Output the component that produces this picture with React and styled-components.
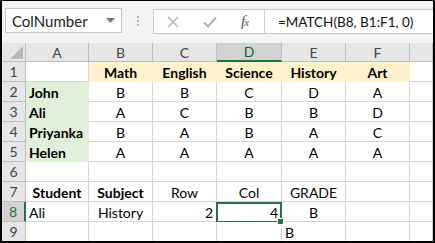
import styled, { createGlobalStyle } from 'styled-components';

const GlobalStyle = createGlobalStyle`
  html, body {
    margin: 0;
    padding: 0;
    background: #ffffff;
  }
  body {
    font-family: Lato, 'Liberation Sans', sans-serif;
  }
`;

const green = '#217346';
const gridLine = '#d4d4d4';

const Frame = styled.div`
  width: 435px;
  height: 243px;
  box-sizing: border-box;
  border-style: solid;
  border-color: #000;
  border-width: 1px 2px 2px 2px;
  overflow: hidden;
  background: #fff;
  display: flex;
  flex-direction: column;
`;

const Toolbar = styled.div`
  height: 42px;
  flex: none;
  background: #f3f3f3;
  display: flex;
  align-items: flex-start;
  padding: 7px 0 0 3px;
  box-sizing: border-box;
`;

const NameBox = styled.div`
  width: 117px;
  height: 25px;
  box-sizing: border-box;
  background: #fff;
  border: 1px solid #c6c6c6;
  display: flex;
  align-items: center;
  justify-content: space-between;
  padding: 0 6px 0 6px;
  font-size: 15px;
  color: #222;
`;

const Dots = styled.div`
  width: 31px;
  height: 25px;
  display: flex;
  flex-direction: column;
  align-items: center;
  justify-content: center;
  gap: 2px;
  span {
    width: 2px;
    height: 2px;
    background: #b4b4b4;
  }
`;

const FormulaBox = styled.div`
  flex: 1;
  height: 25px;
  margin-top: 1px;
  box-sizing: border-box;
  background: #fff;
  border: 1px solid #c6c6c6;
  border-right: none;
  display: flex;
`;

const IconArea = styled.div`
  width: 111px;
  display: flex;
  align-items: center;
  gap: 24px;
  padding-left: 13px;
  box-sizing: border-box;
  border-right: 1px solid #d0d0d0;
`;

const Fx = styled.span`
  font-family: 'Liberation Serif', serif;
  font-style: italic;
  font-size: 15px;
  color: #555;
  letter-spacing: -1px;
  small {
    font-size: 11px;
  }
`;

const Formula = styled.div`
  flex: 1;
  display: flex;
  align-items: center;
  padding-left: 13px;
  font-size: 13.5px;
  color: #111;
  white-space: nowrap;
`;

const Sheet = styled.div`
  flex: 1;
  display: grid;
  grid-template-columns: 24px 63px 64px 64px 65px 64px 64px 1fr;
  grid-template-rows: 19px repeat(9, 20px);
  overflow: hidden;
`;

const Corner = styled.div`
  background: #e6e6e6;
  border-right: 1px solid #bdbdbd;
  border-bottom: 1px solid #bdbdbd;
  box-sizing: border-box;
  display: flex;
  align-items: flex-end;
  justify-content: flex-end;
  padding: 0 2px 2px 0;
  &::after {
    content: '';
    width: 0;
    height: 0;
    border-left: 13px solid transparent;
    border-bottom: 13px solid #b8b8b8;
  }
`;

const ColHead = styled.div`
  background: ${({ $active }) => ($active ? '#d2d2d2' : '#e6e6e6')};
  border-right: 1px solid #bdbdbd;
  border-bottom: ${({ $active }) =>
    $active ? `2px solid ${green}` : '1px solid #bdbdbd'};
  box-sizing: border-box;
  display: flex;
  align-items: center;
  justify-content: center;
  font-size: 14px;
  color: ${({ $active }) => ($active ? '#1d5e38' : '#444')};
`;

const RowHead = styled.div`
  background: ${({ $active }) => ($active ? '#d2d2d2' : '#e6e6e6')};
  border-right: ${({ $active }) =>
    $active ? `2px solid ${green}` : '1px solid #bdbdbd'};
  border-bottom: 1px solid #bdbdbd;
  box-sizing: border-box;
  display: flex;
  align-items: center;
  justify-content: center;
  font-size: 14px;
  color: ${({ $active }) => ($active ? green : '#444')};
`;

const Cell = styled.div`
  position: relative;
  background: ${({ $fill }) => $fill || '#fff'};
  border-right: 1px solid ${({ $fill }) => $fill || gridLine};
  border-bottom: 1px solid ${({ $fill }) => $fill || gridLine};
  box-sizing: border-box;
  display: flex;
  align-items: flex-end;
  justify-content: ${({ $align }) =>
    $align === 'right' ? 'flex-end' : $align === 'center' ? 'center' : 'flex-start'};
  padding: 0 3px 0 3px;
  font-size: 14px;
  line-height: 17px;
  font-weight: ${({ $bold }) => ($bold ? 700 : 400)};
  color: #000;
  white-space: nowrap;
  ${({ $selected }) =>
    $selected &&
    `
    &::after {
      content: '';
      position: absolute;
      left: -1px;
      top: 0;
      right: -1px;
      bottom: -2px;
      border: 2px solid ${green};
    }
    &::before {
      content: '';
      position: absolute;
      right: -3px;
      bottom: -4px;
      width: 5px;
      height: 5px;
      background: ${green};
      border: 1px solid #fff;
      z-index: 2;
    }
  `}
`;

const orange = '#fff2cc';
const mint = '#e2efda';

const c = (v, opts = {}) => ({ v, ...opts });

const rows = [
  [
    c('', {}),
    ...['Math', 'English', 'Science', 'History', 'Art'].map((s) =>
      c(s, { bold: true, align: 'center', fill: orange })
    ),
    c(''),
  ],
  ['John', 'B', 'B', 'C', 'D', 'A'],
  ['Ali', 'A', 'C', 'B', 'B', 'D'],
  ['Priyanka', 'B', 'A', 'B', 'A', 'C'],
  ['Helen', 'A', 'A', 'A', 'A', 'A'],
  [c(''), c(''), c(''), c(''), c(''), c(''), c('')],
  [
    c('Student', { bold: true, align: 'center' }),
    c('Subject', { bold: true, align: 'center' }),
    c('Row', { align: 'center' }),
    c('Col', { align: 'center' }),
    c('GRADE', { align: 'center' }),
    c(''),
    c(''),
  ],
  [
    c('Ali'),
    c('History', { align: 'center' }),
    c('2', { align: 'right' }),
    c('4', { align: 'right', selected: true }),
    c('B', { align: 'center' }),
    c(''),
    c(''),
  ],
  [c(''), c(''), c(''), c(''), c('B'), c(''), c('')],
].map((r, i) => {
  if (i >= 1 && i <= 4) {
    return [
      c(r[0], { bold: true, fill: mint }),
      ...r.slice(1).map((g) => c(g, { align: 'center' })),
      c(''),
    ];
  }
  return r;
});

const columns = ['A', 'B', 'C', 'D', 'E', 'F', ''];

const App = () => (
  <>
    <GlobalStyle />
    <Frame>
      <Toolbar>
        <NameBox>
          <span>ColNumber</span>
          <svg width="9" height="5" viewBox="0 0 9 5">
            <path d="M0 0h9L4.5 5z" fill="#777" />
          </svg>
        </NameBox>
        <Dots>
          <span />
          <span />
          <span />
        </Dots>
        <FormulaBox>
          <IconArea>
            <svg width="12" height="12" viewBox="0 0 12 12">
              <path d="M1 1L11 11M11 1L1 11" stroke="#b0b0b0" strokeWidth="1.4" />
            </svg>
            <svg width="14" height="12" viewBox="0 0 14 12">
              <path d="M1 6.5L5 10.5L13 1.5" stroke="#b0b0b0" strokeWidth="2" fill="none" />
            </svg>
            <Fx>
              f<small>x</small>
            </Fx>
          </IconArea>
          <Formula>=MATCH(B8, B1:F1, 0)</Formula>
        </FormulaBox>
      </Toolbar>
      <Sheet>
        <Corner />
        {columns.map((col, i) => (
          <ColHead key={`col-${i}`} $active={col === 'D'}>
            {col}
          </ColHead>
        ))}
        {rows.map((row, r) => [
          <RowHead key={`rh-${r}`} $active={r === 7}>
            {r + 1}
          </RowHead>,
          ...row.map((cell, ci) => (
            <Cell
              key={`cell-${r}-${ci}`}
              $align={cell.align}
              $bold={cell.bold}
              $fill={cell.fill}
              $selected={cell.selected}
            >
              {cell.v}
            </Cell>
          )),
        ])}
      </Sheet>
    </Frame>
  </>
);

export default App;
